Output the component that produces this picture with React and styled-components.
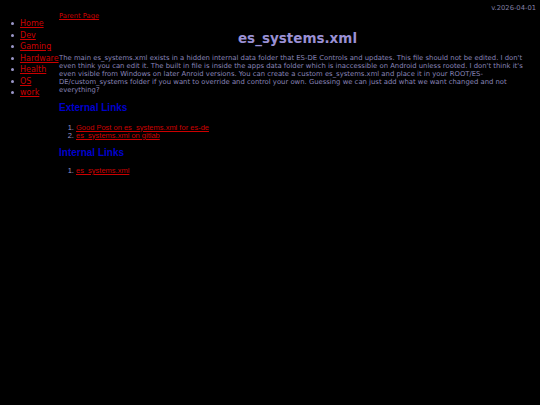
import React from "react";
import styled, { createGlobalStyle } from "styled-components";

const Global = createGlobalStyle`
  html, body { margin: 0; padding: 0; background: #000; }
  body { font-family: "DejaVu Sans", Verdana, sans-serif; color: #8884b8; }
  a { color: #cc0000; }
`;

const Page = styled.div`
  min-height: 405px;
  background: #000;
  display: flex;
  flex-direction: column;
`;

const TopBar = styled.div`
  padding: 4px 4px 0 0;
  text-align: right;
  font-size: 6.75px;
  line-height: 8px;
  color: #8480a8;
`;

const Layout = styled.div`
  display: flex;
  align-items: flex-start;
`;

const Nav = styled.ul`
  flex: 0 0 48px;
  width: 48px;
  margin: 6px 0 0 0;
  padding: 0 0 0 11px;
  list-style: none;
  font-size: 8px;
  line-height: 11.5px;
  white-space: nowrap;
`;

const NavItem = styled.li`
  &::before {
    content: "";
    display: inline-block;
    width: 3px;
    height: 3px;
    border-radius: 50%;
    background: #9a96c8;
    margin-right: 6px;
    vertical-align: 1px;
  }
`;

const Main = styled.main`
  flex: 1;
  padding-right: 4px;
`;

const ParentLink = styled.a`
  display: block;
  font-size: 6.75px;
  line-height: 8px;
`;

const Title = styled.h1`
  margin: 10px 0 0 0;
  text-align: center;
  font-size: 13.5px;
  line-height: 16px;
  font-weight: bold;
  color: #9a90d4;
`;

const Para = styled.p`
  margin: 8px 13px 0 0;
  font-size: 6.85px;
  line-height: 8px;
  color: #8884b8;
`;

const Heading = styled.h2`
  margin: ${(p) => p.$top}px 0 0 0;
  font-family: "Liberation Sans", Arial, sans-serif;
  font-size: 10px;
  line-height: 12px;
  font-weight: bold;
  color: #0000cc;
`;

const List = styled.ol`
  margin: ${(p) => p.$top}px 0 0 0;
  padding-left: 17px;
  font-family: "Liberation Sans", Arial, sans-serif;
  font-size: 7.5px;
  line-height: 8px;
  color: #9a94c8;
`;

const navItems = ["Home", "Dev", "Gaming", "Hardware", "Health", "OS", "work"];

export default function App() {
  return (
    <>
      <Global />
      <Page>
        <TopBar>v.2026-04-01</TopBar>
        <Layout>
          <Nav>
            {navItems.map((n) => (
              <NavItem key={n}>
                <a href="#">{n}</a>
              </NavItem>
            ))}
          </Nav>
          <Main>
            <ParentLink href="#">Parent Page</ParentLink>
            <Title>es_systems.xml</Title>
            <Para>
              The main es_systems.xml exists in a hidden internal data folder that ES-DE Controls and updates. This file should not be edited. I don't even think you can edit it. The built in file is inside the apps data folder which is inaccessible on Android unless rooted. I don't think it's even visible from Windows on later Anroid versions. You can create a custom es_systems.xml and place it in your ROOT/ES-DE/custom_systems folder if you want to override and control your own. Guessing we can just add what we want changed and not everything?
            </Para>
            <Heading $top={7.5}>External Links</Heading>
            <List $top={10}>
              <li><a href="#">Good Post on es_systems.xml for es-de</a></li>
              <li><a href="#">es_systems.xml on gitlab</a></li>
            </List>
            <Heading $top={7}>Internal Links</Heading>
            <List $top={8.5}>
              <li><a href="#">es_systems.xml</a></li>
            </List>
          </Main>
        </Layout>
      </Page>
    </>
  );
}
